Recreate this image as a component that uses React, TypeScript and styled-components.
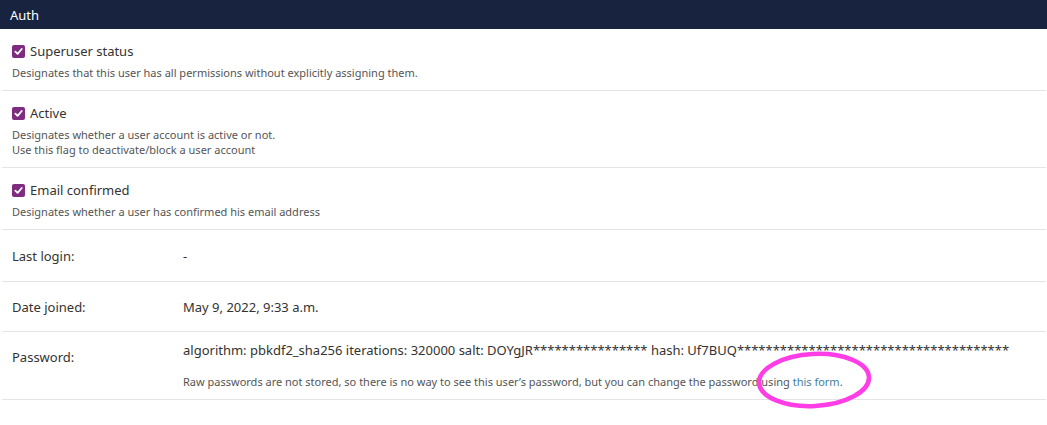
import React from "react";
import styled, { createGlobalStyle } from "styled-components";

const Global = createGlobalStyle`
  html, body { margin: 0; padding: 0; background: #fff; }
  body { font-family: "Noto Sans", "Open Sans", sans-serif; color: #333; }
`;

const Page = styled.div`
  position: relative;
  width: 1047px;
  min-height: 425px;
`;

const Header = styled.h2`
  margin: 0;
  height: 29px;
  box-sizing: border-box;
  padding: 0 10px;
  display: flex;
  align-items: center;
  background: #17233f;
  color: #fff;
  font-size: 13px;
  font-weight: 400;
`;

const Rows = styled.div`
  margin: 0 1px 0 2px;
`;

const CheckRow = styled.div`
  padding: 10px 10px 10px 10px;
  border-bottom: 1px solid #e4e4e4;
  display: flex;
  flex-direction: column;
  gap: 2px;
`;

const CheckLine = styled.label`
  display: flex;
  align-items: center;
  gap: 5px;
  height: 24px;
  font-size: 13px;
  color: #333;
`;

const Box = styled.span`
  width: 13px;
  height: 13px;
  border-radius: 2px;
  background: #7d2c7f;
  display: inline-flex;
  align-items: center;
  justify-content: center;
`;

const Help = styled.div`
  font-size: 11px;
  line-height: 15px;
  color: #555;
`;

const FieldRow = styled.div<{ $top: number; $h: number }>`
  padding: ${(p) => p.$top}px 10px 9px 10px;
  border-bottom: 1px solid #e4e4e4;
  display: flex;
  min-height: ${(p) => p.$h}px;
`;

const Label = styled.div<{ $pt?: number }>`
  width: 171px;
  flex: none;
  font-size: 13px;
  color: #333;
  display: flex;
  align-items: ${(p) => (p.$pt ? "flex-start" : "center")};
  padding-top: ${(p) => p.$pt ?? 0}px;
`;

const Value = styled.div<{ $center?: boolean }>`
  font-size: 13px;
  color: #333;
  display: flex;
  flex-direction: column;
  justify-content: ${(p) => (p.$center ? "center" : "flex-start")};
`;

const Line = styled.div`
  line-height: 16px;
`;

const PwHelp = styled.div`
  margin-top: 16px;
  font-size: 11px;
  line-height: 16px;
  color: #555;
`;

const Link = styled.a`
  color: #447e9b;
  text-decoration: none;
`;

const Annotation = styled.svg`
  position: absolute;
  left: 750px;
  top: 344px;
  overflow: visible;
  pointer-events: none;
`;

const Check = ({ label, help }: { label: string; help: string[] }) => (
  <CheckRow>
    <CheckLine>
      <Box>
        <svg width="9" height="9" viewBox="0 0 10 10">
          <path d="M1.5 5.2 L4 7.6 L8.6 2.2" stroke="#fff" strokeWidth="2" fill="none" strokeLinecap="round" strokeLinejoin="round" />
        </svg>
      </Box>
      {label}
    </CheckLine>
    <Help>
      {help.map((h) => (
        <div key={h}>{h}</div>
      ))}
    </Help>
  </CheckRow>
);

export default function App() {
  return (
    <Page>
      <Global />
      <Header>Auth</Header>
      <Rows>
        <Check label="Superuser status" help={["Designates that this user has all permissions without explicitly assigning them."]} />
        <Check label="Active" help={["Designates whether a user account is active or not.", "Use this flag to deactivate/block a user account"]} />
        <Check label="Email confirmed" help={["Designates whether a user has confirmed his email address"]} />
        <FieldRow $top={10} $h={32}>
          <Label>Last login:</Label>
          <Value $center>-</Value>
        </FieldRow>
        <FieldRow $top={10} $h={30}>
          <Label>Date joined:</Label>
          <Value $center>May 9, 2022, 9:33 a.m.</Value>
        </FieldRow>
        <FieldRow $top={10} $h={48}>
          <Label $pt={6}>Password:</Label>
          <Value>
            <Line>algorithm: pbkdf2_sha256 iterations: 320000 salt: DOYgJR**************** hash: Uf7BUQ**************************************</Line>
            <PwHelp>
              Raw passwords are not stored, so there is no way to see this user’s password, but you can change the password using <Link href="#">this form</Link>.
            </PwHelp>
          </Value>
        </FieldRow>
      </Rows>
      <Annotation width="130" height="76" viewBox="0 0 130 76">
        <ellipse cx="64" cy="36" rx="55" ry="26" transform="rotate(-3 64 36)" fill="none" stroke="#ff3de6" strokeWidth="4.5" />
      </Annotation>
    </Page>
  );
}
